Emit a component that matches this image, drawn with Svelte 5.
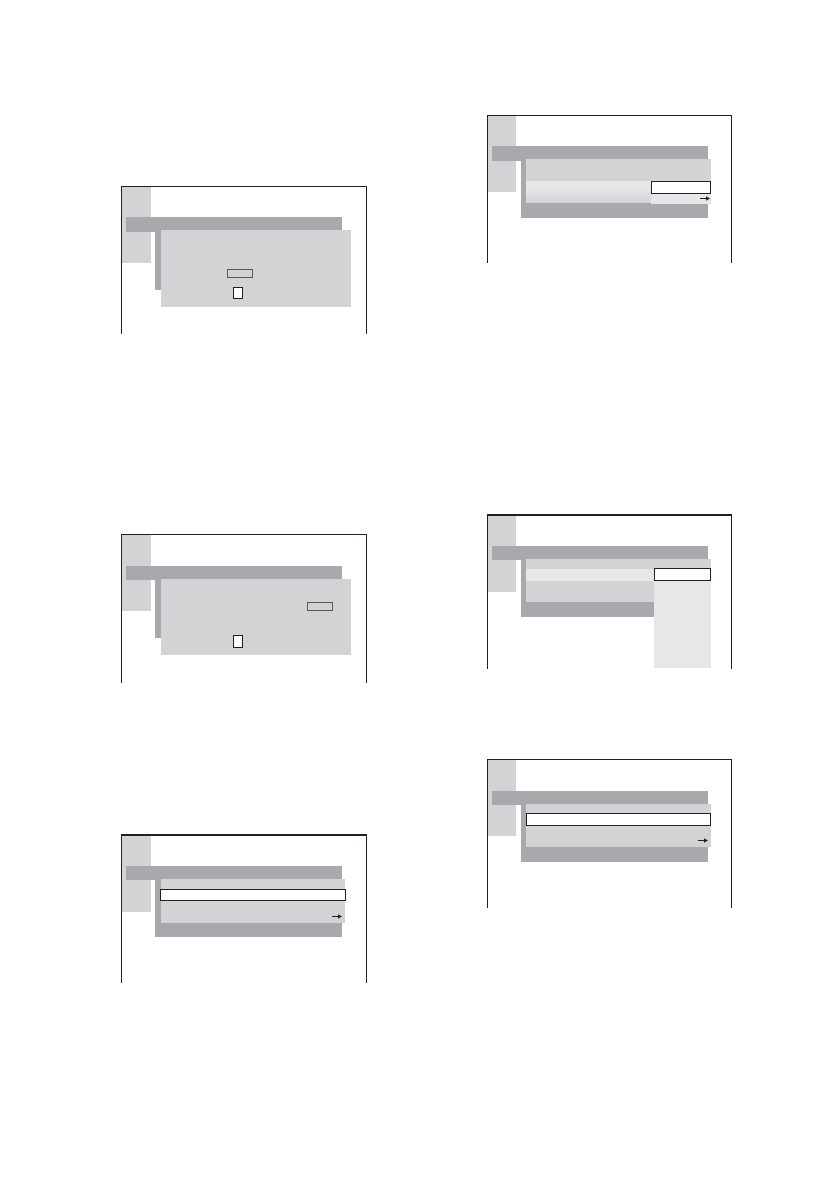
<style>
  :global(body) {
    margin: 0;
    background-color: #ffffff;
    font-family: "Liberation Sans", Arial, sans-serif;
  }

  .page {
    display: grid;
    grid-template-columns: 246fr 245fr;
    align-items: start;
    column-gap: 120px;
    padding: 115px 106px 207px 121px;
  }

  .column {
    display: flex;
    flex-direction: column;
  }

  .column.left {
    padding-top: 71px;
  }

  /* one screen, open at the bottom */
  .screen {
    display: grid;
    box-sizing: border-box;
    min-height: 148px;
    border: 1px solid #231f20;
    border-bottom: 0;
  }

  .screen.thick {
    border-top-width: 2px;
  }

  .screen.tall {
    min-height: 149px;
  }

  .screen.long {
    min-height: 155px;
  }

  .side,
  .window {
    grid-area: 1 / 1;
  }

  .side {
    width: 29px;
    height: 76px;
    background-color: #d1d3d4;
  }

  .right .side {
    width: 28px;
  }

  .window {
    padding: 30px 24px 0 4px;
  }

  .right .window {
    padding-right: 23px;
  }

  .window.low {
    padding-top: 31px;
  }

  .title {
    height: 14px;
    background-color: #a7a9ac;
  }

  .title.big {
    height: 15px;
  }

  .back {
    display: flow-root;
    height: 57px;
    margin-left: 29px;
    padding-left: 6px;
    background-color: #a7a9ac;
  }

  .right .back {
    padding-left: 5px;
  }

  .back.deep {
    height: 58px;
  }

  .panel {
    position: relative;
    display: flex;
    flex-direction: column;
    box-sizing: border-box;
    height: 44px;
    margin: -1px -3px 0 0;
    padding-top: 9px;
    background-color: #d1d3d4;
  }

  .big + .back .panel {
    margin-top: -2px;
  }

  .panel.short {
    height: 43px;
  }

  .panel.dialog {
    height: 76px;
    margin-right: -9px;
    padding-top: 23px;
  }

  .big + .back .panel.dialog {
    height: 77px;
    padding-top: 39px;
  }

  button,
  input {
    display: block;
    box-sizing: border-box;
    margin: 0;
    padding: 0;
    border: 1px solid #231f20;
    border-radius: 0;
    background-color: #ffffff;
    font: inherit;
  }

  .key {
    width: 26px;
    height: 9px;
    margin-left: 66px;
    border-color: #58595b;
    background-color: #d1d3d4;
  }

  .key.next {
    margin-left: 146px;
  }

  .digit {
    width: 10px;
    height: 12px;
    margin: 9px 0 0 72px;
    font-size: 8px;
    text-align: center;
  }

  .next + .digit {
    height: 13px;
    margin-top: 24px;
  }

  .item {
    height: 13px;
  }

  .item.outset {
    height: 12px;
    margin: 1px -1px 0;
  }

  .more {
    display: flex;
    flex: 1;
    align-items: flex-end;
    justify-content: flex-end;
    padding: 0 3px 4px;
  }

  .arrow {
    display: block;
    width: 10px;
    height: 5px;
  }

  .row {
    height: 12px;
    margin-top: 1px;
    background-color: #e6e7e8;
  }

  .row.fade {
    height: 22px;
    margin-top: 13px;
    background: linear-gradient(#e6e7e8 30%, #d1d3d4);
  }

  /* drop-down lists lie over the panel and its backing */
  .list {
    position: absolute;
    top: 9px;
    right: 0;
    display: flex;
    flex-direction: column;
    width: 57px;
    height: 100px;
    background-color: #e6e7e8;
  }

  .list.small {
    top: 22px;
    width: 60px;
    height: 23px;
  }

  .list .more {
    padding: 0 1px 3px;
  }

  .gap-90 {
    margin-top: 90px;
  }

  .gap-151 {
    margin-top: 151px;
  }

  .gap-200 {
    margin-top: 200px;
  }

  .gap-251 {
    margin-top: 251px;
  }
</style>

<script>
  let first = $state('');
  let second = $state('');
</script>

{#snippet arrow()}
  <svg class="arrow" viewBox="0 0 10 5" aria-hidden="true">
    <path d="M0 2.5H7" stroke="#231f20" stroke-width="1" />
    <path d="M6 0.3L10 2.5L6 4.7Z" fill="#231f20" />
  </svg>
{/snippet}

<main class="page">
  <div class="column left">
    <section class="screen">
      <div class="side"></div>
      <div class="window">
        <div class="title big"></div>
        <div class="back deep">
          <div class="panel dialog">
            <button class="key" aria-label="Select"></button>
            <input class="digit" aria-label="Value" maxlength="1" bind:value={first} />
          </div>
        </div>
      </div>
    </section>

    <section class="screen tall gap-200">
      <div class="side"></div>
      <div class="window low">
        <div class="title"></div>
        <div class="back deep">
          <div class="panel dialog">
            <button class="key next" aria-label="Select"></button>
            <input class="digit" aria-label="Value" maxlength="1" bind:value={second} />
          </div>
        </div>
      </div>
    </section>

    <section class="screen thick tall gap-151">
      <div class="side"></div>
      <div class="window">
        <div class="title"></div>
        <div class="back">
          <div class="panel">
            <button class="item outset" aria-label="Menu item"></button>
            <div class="more">{@render arrow()}</div>
          </div>
        </div>
      </div>
    </section>
  </div>

  <div class="column right">
    <section class="screen">
      <div class="side"></div>
      <div class="window">
        <div class="title big"></div>
        <div class="back">
          <div class="panel">
            <div class="row fade"></div>
            <div class="list small">
              <button class="item" aria-label="Option"></button>
              <div class="more">{@render arrow()}</div>
            </div>
          </div>
        </div>
      </div>
    </section>

    <section class="screen thick long gap-251">
      <div class="side"></div>
      <div class="window">
        <div class="title"></div>
        <div class="back">
          <div class="panel short">
            <div class="row"></div>
            <div class="list">
              <button class="item" aria-label="Option"></button>
            </div>
          </div>
        </div>
      </div>
    </section>

    <section class="screen tall gap-90">
      <div class="side"></div>
      <div class="window low">
        <div class="title"></div>
        <div class="back">
          <div class="panel short">
            <button class="item" aria-label="Menu item"></button>
            <div class="more">{@render arrow()}</div>
          </div>
        </div>
      </div>
    </section>
  </div>
</main>
